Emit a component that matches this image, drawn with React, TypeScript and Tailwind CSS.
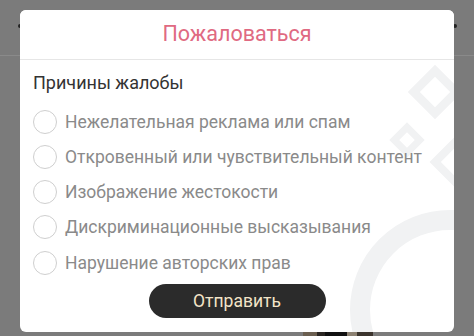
import React from "react";

const reasons = [
  "Нежелательная реклама или спам",
  "Откровенный или чувствительный контент",
  "Изображение жестокости",
  "Дискриминационные высказывания",
  "Нарушение авторских прав",
];

function Watermark() {
  return (
    <svg
      className="absolute inset-0 h-full w-full"
      viewBox="0 0 434 322"
      fill="none"
      stroke="#f1f2f3"
    >
      <rect x="400" y="67" width="30" height="30" strokeWidth="8.5" transform="rotate(45 415 82)" />
      <rect x="378" y="121" width="18" height="18" strokeWidth="7" transform="rotate(45 387 130)" />
      <rect x="421" y="138" width="28" height="28" strokeWidth="8" transform="rotate(45 435 152)" />
      <circle cx="430" cy="300" r="90" strokeWidth="20" />
    </svg>
  );
}

export default function App() {
  return (
    <div
      className="relative h-[336px] w-[474px] overflow-hidden bg-[#7b7b7b]"
      style={{ fontFamily: "Roboto, 'Noto Sans', sans-serif" }}
    >
      {/* page behind the overlay */}
      <div className="absolute left-0 right-0 top-[55px] h-px bg-[#8a8a8a]" />
      <div className="absolute left-[18px] top-[24px] h-[4px] w-[4px] rounded-full bg-[#222]" />
      <div className="absolute right-[17px] top-[24px] h-[4px] w-[4px] rounded-full bg-[#222]" />
      <div className="absolute bottom-0 left-[303px] flex h-[5px] w-[70px]">
        <div className="w-[14px] bg-[#6b5f50]" />
        <div className="w-[8px] bg-[#2a2622]" />
        <div className="w-[22px] bg-[#111]" />
        <div className="w-[10px] bg-[#8c8172]" />
        <div className="w-[16px] bg-[#3b342d]" />
      </div>

      {/* dialog */}
      <div className="relative mx-[20px] mt-[10px] h-[322px] overflow-hidden rounded-[6px] bg-white">
        <Watermark />
        <div className="relative flex h-[50px] items-center justify-center border-b border-[#e6e6e6] bg-white">
          <span className="text-[21.5px] text-[#e06a82]">Пожаловаться</span>
        </div>
        <div className="relative px-[13px] pt-[11px]">
          <div className="text-[18px] leading-[24px] text-[#333]">Причины жалобы</div>
          <div className="mt-[9px] flex flex-col">
            {reasons.map((r) => (
              <label key={r} className="flex h-[35.25px] items-center gap-[8px]">
                <span className="h-[24px] w-[24px] shrink-0 rounded-full border-[1.5px] border-[#cfcfcf] bg-white" />
                <span className="text-[17.5px] text-[#8a8a8a]">{r}</span>
              </label>
            ))}
          </div>
          <div className="mt-[4px] flex justify-center">
            <button className="h-[34px] w-[177px] rounded-full bg-[#2b2b2b] text-[17.5px] text-[#f3e4c8]">
              Отправить
            </button>
          </div>
        </div>
      </div>
    </div>
  );
}
